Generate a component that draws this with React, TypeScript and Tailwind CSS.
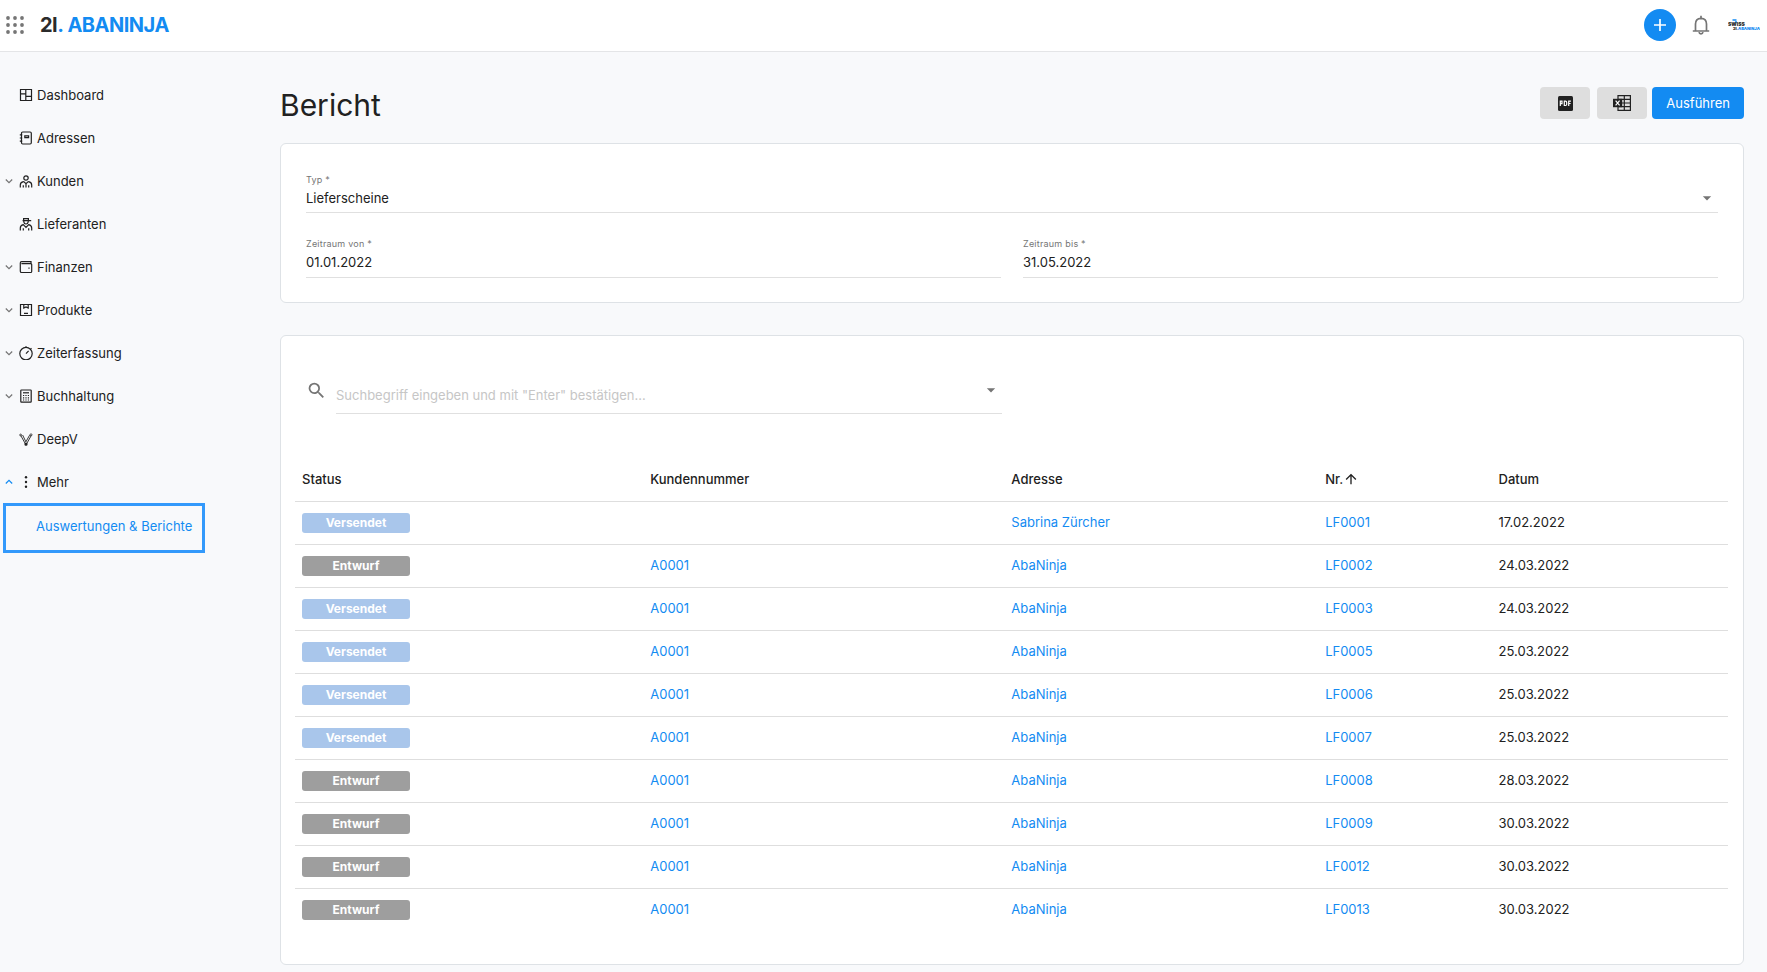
import React from 'react';
import { MdArrowDropDown, MdArrowUpward, MdSearch } from 'react-icons/md';

type IconName =
  | 'dashboard'
  | 'adressen'
  | 'kunden'
  | 'lieferanten'
  | 'finanzen'
  | 'produkte'
  | 'zeit'
  | 'buchhaltung'
  | 'deepv'
  | 'mehr';

interface NavItem {
  label: string;
  icon: IconName;
  chevron?: 'down' | 'up';
}

interface Row {
  status: 'Versendet' | 'Entwurf';
  kunde: string;
  adresse: string;
  nr: string;
  datum: string;
}

const navItems: NavItem[] = [
  { label: 'Dashboard', icon: 'dashboard' },
  { label: 'Adressen', icon: 'adressen' },
  { label: 'Kunden', icon: 'kunden', chevron: 'down' },
  { label: 'Lieferanten', icon: 'lieferanten' },
  { label: 'Finanzen', icon: 'finanzen', chevron: 'down' },
  { label: 'Produkte', icon: 'produkte', chevron: 'down' },
  { label: 'Zeiterfassung', icon: 'zeit', chevron: 'down' },
  { label: 'Buchhaltung', icon: 'buchhaltung', chevron: 'down' },
  { label: 'DeepV', icon: 'deepv' },
  { label: 'Mehr', icon: 'mehr', chevron: 'up' },
];

const rows: Row[] = [
  { status: 'Versendet', kunde: '', adresse: 'Sabrina Zürcher', nr: 'LF0001', datum: '17.02.2022' },
  { status: 'Entwurf', kunde: 'A0001', adresse: 'AbaNinja', nr: 'LF0002', datum: '24.03.2022' },
  { status: 'Versendet', kunde: 'A0001', adresse: 'AbaNinja', nr: 'LF0003', datum: '24.03.2022' },
  { status: 'Versendet', kunde: 'A0001', adresse: 'AbaNinja', nr: 'LF0005', datum: '25.03.2022' },
  { status: 'Versendet', kunde: 'A0001', adresse: 'AbaNinja', nr: 'LF0006', datum: '25.03.2022' },
  { status: 'Versendet', kunde: 'A0001', adresse: 'AbaNinja', nr: 'LF0007', datum: '25.03.2022' },
  { status: 'Entwurf', kunde: 'A0001', adresse: 'AbaNinja', nr: 'LF0008', datum: '28.03.2022' },
  { status: 'Entwurf', kunde: 'A0001', adresse: 'AbaNinja', nr: 'LF0009', datum: '30.03.2022' },
  { status: 'Entwurf', kunde: 'A0001', adresse: 'AbaNinja', nr: 'LF0012', datum: '30.03.2022' },
  { status: 'Entwurf', kunde: 'A0001', adresse: 'AbaNinja', nr: 'LF0013', datum: '30.03.2022' },
];

const iconShapes: Record<IconName, React.ReactNode> = {
  dashboard: <path d="M1.5 1.5h11v11h-11zM6.8 1.5v11M1.5 5.8h5.3M6.8 8.4h5.7" />,
  adressen: (
    <>
      <rect x="2.5" y="1" width="9.8" height="12" rx="1.2" />
      <path d="M.8 3.8h2.4M.8 7h2.4M.8 10.2h2.4M5.8 4.8h3.8v1.900H5.8z" />
    </>
  ),
  kunden: (
    <>
      <circle cx="7" cy="4" r="2.2" />
      <path d="M1.3 13.5V11q0-2.800 3.200-3.400M12.700 13.500V11q0-2.800-3.200-3.400M4.500 7.400L7 9.600l2.500-2.200M4.300 13.500v-2.200M9.700 13.500v-2.200M7 9.600v3.900" />
    </>
  ),
  lieferanten: (
    <>
      <path d="M3.600 3.600h8.600M4.600 3.600V1.600h4.800v2M4.800 4v.8q.4 2.200 2.200 2.200T9.200 4.800V4" />
      <path d="M1.300 13.500V11q0-2.600 3-3.400L7 10.400l2.700-2.800q3 .8 3 3.400v2.500M4.300 13.500v-2.200M9.700 13.500v-2.200" />
    </>
  ),
  finanzen: (
    <>
      <path d="M12 3.600V1.700H2.600Q1.300 1.700 1.300 2.900v8.300q0 1.300 1.300 1.300h9q1.100 0 1.100-1.100V4.800q0-1.100-1.100-1.100H2.400" />
      <path d="M10 7.500v1.200" />
    </>
  ),
  produkte: <path d="M1.500 1.500h11v11h-11zM4.800 1.500v3.600L7 4l2.200 1.100V1.500M5 10.300h4" />,
  zeit: (
    <>
      <circle cx="7" cy="7.600" r="6.200" />
      <path d="M7 .2v1.200M7 7.600l2.600-2.700M11.600 2.200l.9.800" />
    </>
  ),
  buchhaltung: (
    <>
      <rect x="1.800" y="1" width="10.400" height="12.200" rx=".6" />
      <path d="M4 3.800h6" />
      <path d="M4 6.500h6M4 8.800h6M4 11h6" strokeDasharray="1.200 1.200" />
    </>
  ),
  deepv: (
    <>
      <path d="M1.800 3.600L6.700 12.400M10.600 3.200L7 9.600M3.600 3l3.400 7M7.300 12.400L12.200 3.600" strokeWidth=".9" />
      <circle cx="1.600" cy="3" r=".9" strokeWidth=".8" />
      <circle cx="12" cy="2.800" r="1" strokeWidth=".8" />
      <circle cx="7" cy="12.200" r="1" fill="currentColor" />
    </>
  ),
  mehr: (
    <g fill="currentColor" stroke="none">
      <circle cx="7" cy="2.200" r="1.200" />
      <circle cx="7" cy="7" r="1.200" />
      <circle cx="7" cy="11.800" r="1.200" />
    </g>
  ),
};

const NavIcon = ({ name }: { name: IconName }) => (
  <svg viewBox="0 0 14 14" className="size-3.5 shrink-0" fill="none" stroke="currentColor" strokeWidth="1.2" aria-hidden="true">
    {iconShapes[name]}
  </svg>
);

const Chevron = ({ direction }: { direction: 'down' | 'up' }) => (
  <svg
    viewBox="0 0 8 8"
    className={direction === 'up' ? 'size-2 text-[#138bf2]' : 'size-2 text-[#757575]'}
    fill="none"
    stroke="currentColor"
    strokeWidth="1.2"
    aria-hidden="true"
  >
    <path d={direction === 'up' ? 'M.8 5.500L4 2.300l3.200 3.200' : 'M.8 2.500L4 5.700l3.200-3.200'} />
  </svg>
);

const Header = () => (
  <header className="flex h-13 items-center justify-between border-b border-[#e4e5e7] bg-white pr-[7px] pb-0.5 pl-1.5">
    <div className="flex items-center">
      <button type="button" aria-label="Apps" className="text-[#757575]">
        <svg viewBox="0 0 18 18" className="size-4.5" fill="currentColor">
          {[2, 9, 16].map((y) => [2, 9, 16].map((x) => <circle key={`${x}-${y}`} cx={x} cy={y} r="1.9" />))}
        </svg>
      </button>
      <a href="#" className="ml-4 flex items-center text-[20px] leading-6 font-bold tracking-tight text-[#2b2b2b]">
        <span>2I</span>
        <span className="text-[#138bf2]">.</span>
        <span className="ml-1 text-[#138bf2]">ABANINJA</span>
      </a>
    </div>
    <div className="flex items-center">
      <button type="button" aria-label="Neu" className="flex size-8 items-center justify-center rounded-full bg-[#138bf2] text-white">
        <svg viewBox="0 0 12 12" className="size-3" stroke="currentColor" strokeWidth="1.7">
          <path d="M6 0v12M0 6h12" />
        </svg>
      </button>
      <button type="button" aria-label="Benachrichtigungen" className="ml-4 text-[#757575]">
        <svg viewBox="0 0 18 20" className="h-5 w-4.5" fill="none" stroke="currentColor" strokeWidth="1.7">
          <path d="M.8 16h16.400M3.500 16V9q0-5.500 5.500-5.700Q14.500 3.500 14.500 9v7" />
          <path d="M9 .8v2.500" />
          <path d="M7 17.200q.3 1.600 2 1.600t2-1.600" />
        </svg>
      </button>
      <a href="#" aria-label="Konto" className="ml-4.5">
        <svg viewBox="0 0 32 12" className="h-3 w-8">
          <path d="M4.500 1h4M7 3h2" stroke="#138bf2" strokeWidth="1.3" />
          <text x="0" y="7" fontSize="5" fontWeight="900" fontFamily="Inter, sans-serif" fill="#2b2b2b">
            SWISS
          </text>
          <text x="5" y="11" fontSize="4" fontWeight="900" fontFamily="Inter, sans-serif" fill="#2b2b2b">
            2I.
          </text>
          <text x="10" y="11" fontSize="4" fontWeight="900" fontFamily="Inter, sans-serif" fill="#138bf2">
            ABANINJA
          </text>
        </svg>
      </a>
    </div>
  </header>
);

const Sidebar = () => (
  <nav className="w-70 shrink-0 pt-[21px]">
    <ul>
      {navItems.map((item) => (
        <li key={item.label}>
          <a href="#" className="flex h-[43px] items-center pl-[5px]">
            <span className="flex w-3.5 items-center">{item.chevron && <Chevron direction={item.chevron} />}</span>
            <NavIcon name={item.icon} />
            <span className="ml-1">{item.label}</span>
          </a>
        </li>
      ))}
      <li className="ml-[3px] flex">
        <a href="#" className="flex h-[50px] items-center border-3 border-[#3399fb] pr-2.5 pb-1 pl-[30px] whitespace-nowrap text-[#138bf2]">
          Auswertungen &amp; Berichte
        </a>
      </li>
    </ul>
  </nav>
);

const DateField = ({ id, label, value }: { id: string; label: string; value: string }) => (
  <div className="flex flex-1 flex-col border-b border-[#e0e0e0] pb-[3px]">
    <label htmlFor={id} className="text-[9px] leading-3 tracking-wide text-[#757575]">
      {label}
    </label>
    <input id={id} type="text" defaultValue={value} className="h-6 w-full bg-transparent outline-none" />
  </div>
);

const FilterCard = () => (
  <section className="rounded-md border border-[#dee2e6] bg-white px-[25px] pt-[30px] pb-6">
    <div className="relative flex flex-col border-b border-[#e0e0e0] pb-[3px]">
      <label htmlFor="typ" className="text-[9px] leading-3 tracking-wide text-[#757575]">
        Typ *
      </label>
      <select id="typ" className="h-[23px] w-full appearance-none bg-transparent outline-none">
        <option>Lieferscheine</option>
      </select>
      <MdArrowDropDown className="pointer-events-none absolute right-px bottom-1 size-5 text-[#757575]" />
    </div>
    <div className="mt-[25px] flex gap-[22px]">
      <DateField id="von" label="Zeitraum von *" value="01.01.2022" />
      <DateField id="bis" label="Zeitraum bis *" value="31.05.2022" />
    </div>
  </section>
);

const StatusBadge = ({ status }: { status: Row['status'] }) => (
  <span
    className={`flex h-5 w-27 items-center justify-center rounded-[3px] text-[12px] leading-4 font-bold text-white ${
      status === 'Versendet' ? 'bg-[#a9c6eb]' : 'bg-[#9e9e9e]'
    }`}
  >
    {status}
  </span>
);

const ResultCard = () => (
  <section className="mt-8 rounded-md border border-[#dee2e6] bg-white pt-10 pr-[15px] pb-[33px] pl-3.5">
    <div className="flex w-1/2 items-start pr-2.5 pl-[11px]">
      <MdSearch className="mt-1 size-[21px] shrink-0 text-[#757575]" />
      <div className="relative ml-[9px] flex-1 border-b border-[#e0e0e0]">
        <input
          type="text"
          aria-label="Suchbegriff"
          placeholder={'Suchbegriff eingeben und mit "Enter" bestätigen...'}
          className="h-[37px] w-full bg-transparent outline-none placeholder:text-[#c6c6c6]"
        />
        <MdArrowDropDown className="pointer-events-none absolute top-1 right-px size-5 text-[#757575]" />
      </div>
    </div>
    <table className="mt-11 w-full table-fixed border-collapse text-left">
      <colgroup>
        <col className="w-[24.3%]" />
        <col className="w-[25.2%]" />
        <col className="w-[21.9%]" />
        <col className="w-[12.1%]" />
        <col />
      </colgroup>
      <thead>
        <tr className="h-[43px] border-b border-[#dedede]">
          <th className="px-[7px] font-medium">Status</th>
          <th className="px-[7px] font-medium">Kundennummer</th>
          <th className="px-[7px] font-medium">Adresse</th>
          <th className="px-[7px] font-medium">
            <span className="flex items-center">
              Nr.
              <MdArrowUpward className="size-4" />
            </span>
          </th>
          <th className="px-[7px] font-medium">Datum</th>
        </tr>
      </thead>
      <tbody>
        {rows.map((row) => (
          <tr key={row.nr} className="h-[43px] border-b border-[#dedede] last:border-b-0">
            <td className="px-[7px]">
              <StatusBadge status={row.status} />
            </td>
            <td className="px-[7px] pb-0.5">
              {row.kunde && (
                <a href="#" className="text-[#138bf2]">
                  {row.kunde}
                </a>
              )}
            </td>
            <td className="px-[7px] pb-0.5">
              <a href="#" className="text-[#138bf2]">
                {row.adresse}
              </a>
            </td>
            <td className="px-[7px] pb-0.5">
              <a href="#" className="text-[#138bf2]">
                {row.nr}
              </a>
            </td>
            <td className="px-[7px] pb-0.5">{row.datum}</td>
          </tr>
        ))}
      </tbody>
    </table>
  </section>
);

const App = () => {
  return (
    <div className="min-h-screen bg-[#f8f9fb] font-['Inter',sans-serif] text-[13px] leading-5 text-[#212121]">
      <Header />
      <div className="flex">
        <Sidebar />
        <main className="min-w-0 flex-1 pt-[35px] pr-[23px] pb-2">
          <div className="mb-4 flex h-10 items-start justify-between">
            <h1 className="text-[30px] leading-9">Bericht</h1>
            <div className="flex items-center">
              <button type="button" aria-label="PDF" className="flex h-8 w-[50px] items-center justify-center rounded bg-[#dedede]">
                <svg viewBox="0 0 15 15" className="size-[15px]">
                  <rect width="15" height="15" rx="1.5" fill="#212121" />
                  <path
                    d="M2.300 10V5.200h1.700v2.500H2.300M6.300 9.500V5.200h1.200q1.200 0 1.200 1.200v1.900q0 1.200-1.200 1.200zM10.700 10V5.200h2.200M10.700 7.500h1.900"
                    fill="none"
                    stroke="#fff"
                    strokeWidth="1.2"
                  />
                </svg>
              </button>
              <button type="button" aria-label="Excel" className="ml-[7px] flex h-8 w-[50px] items-center justify-center rounded bg-[#dedede]">
                <svg viewBox="0 0 18 16" className="h-4 w-[18px]" fill="none" stroke="#212121" strokeWidth="1.2">
                  <path d="M5 .6h12.400v14.800H5zM5 4.300h12.400M5 8h12.400M5 11.700h12.400M11.300.6v14.800" />
                  <rect x="0" y="3.800" width="9.200" height="8.400" fill="#212121" stroke="none" />
                  <path d="M2.600 5.600l4 4.800M6.600 5.600l-4 4.800" stroke="#fff" />
                </svg>
              </button>
              <button type="button" className="ml-[5px] h-8 rounded bg-[#138bf2] px-3.5 text-white">
                Ausführen
              </button>
            </div>
          </div>
          <FilterCard />
          <ResultCard />
        </main>
      </div>
    </div>
  );
};

export default App;
